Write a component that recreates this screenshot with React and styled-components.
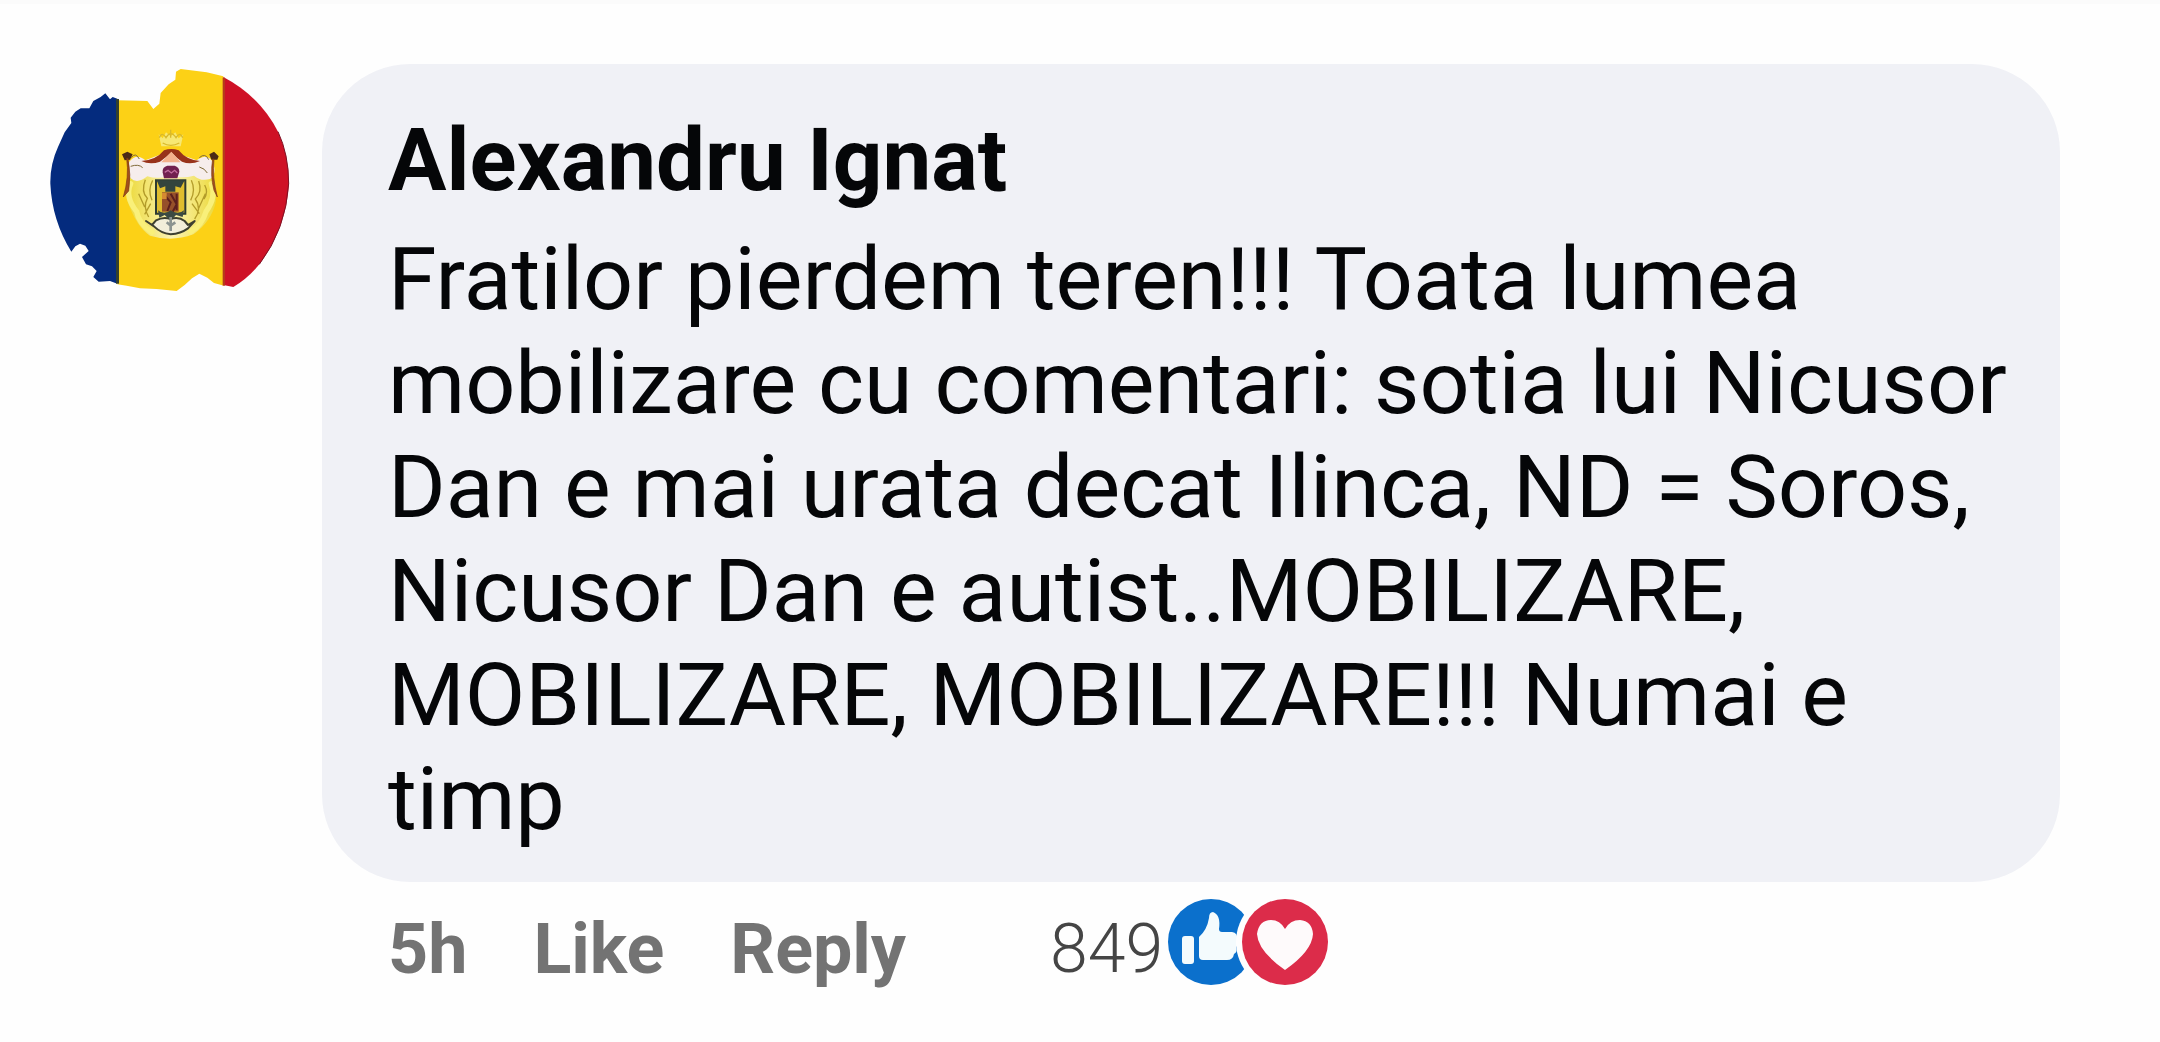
import styled, { createGlobalStyle } from "styled-components";

const GlobalStyle = createGlobalStyle`
  * {
    box-sizing: border-box;
  }

  body {
    margin: 0;
    background-color: #fefefe;
    font-family: Roboto, "Liberation Sans", sans-serif;
  }
`;

const Page = styled.main`
  border-top: 4px solid #fbfbfb;
  padding: 60px 100px 40px 50px;
`;

const Comment = styled.article`
  display: flex;
  align-items: flex-start;
  gap: 32px;
`;

const AvatarLink = styled.a`
  flex: none;
  display: block;
  width: 240px;
  padding-top: 3px;

  svg {
    display: block;
    width: 100%;
  }
`;

const Body = styled.div`
  flex: 1;
  min-width: 0;
`;

const Bubble = styled.div`
  padding: 44px 40px 31px 66px;
  border-radius: 88px;
  background-color: #f0f1f6;
  color: #050608;
`;

const AuthorName = styled.a`
  display: block;
  width: fit-content;
  font-size: 87px;
  font-weight: 700;
  line-height: 104px;
  color: inherit;
  text-decoration: none;
`;

const CommentText = styled.p`
  margin: 15px 0 0;
  font-size: 88px;
  line-height: 104px;
`;

const Footer = styled.footer`
  display: flex;
  align-items: flex-start;
  padding: 16px 0 0 66px;
  font-size: 70px;
  line-height: 102px;
  color: #737373;
`;

const Actions = styled.div`
  display: flex;
  gap: 66px;
  font-weight: 700;
`;

const Time = styled.time``;

const ActionButton = styled.button`
  padding: 0;
  border: none;
  background: none;
  font: inherit;
  color: inherit;
  cursor: pointer;
`;

const Reactions = styled.button`
  display: flex;
  align-items: flex-start;
  gap: 4px;
  margin-left: 144px;
  padding: 0;
  border: none;
  background: none;
  font: inherit;
  font-size: 68px;
  font-weight: 300;
  color: #454545;
  cursor: pointer;

  svg {
    display: block;
    width: 162px;
    height: 88px;
  }
`;

const FlagAvatar = () => (
  <svg viewBox="60 50 720 690" role="img" aria-label="Alexandru Ignat">
    <defs>
      <linearGradient id="cape" x1="0" x2="1">
        <stop offset="0" stopColor="#ecd93a" />
        <stop offset="0.5" stopColor="#fbf3b4" />
        <stop offset="1" stopColor="#ecd93a" />
      </linearGradient>
    </defs>
    {/* blue stripe with the torn edge */}
    <path
      d="M262 145 L248 140 L240 147 L226 129 L212 140 L190 152 L178 174 L152 174 L136 184 L122 202 L124 218 L104 246 L84 290 Q60 342 61 400 Q66 510 124 604 L136 588 L150 580 L166 586 L176 602 L156 620 L168 642 L186 648 L200 662 L190 680 L206 694 L240 692 L262 700 Z"
      fill="#042b7e"
    />
    <path
      d="M262 150 L352 152 L370 176 L388 160 L392 128 L416 102 L436 88 L438 64 L452 56 L500 62 L530 66 L580 78 L582 706 L552 698 L532 682 L508 670 L486 684 L464 704 L440 722 L380 716 L330 714 L290 706 L262 702 Z"
      fill="#fcd116"
    />
    <path d="M258 146 h9 v554 h-9 Z" fill="#33402f" />
    {/* red stripe */}
    <path d="M580 80 Q690 138 744 244 Q776 312 777 400 Q768 536 688 642 Q654 684 610 710 L580 704 Z" fill="#cf1126" />
    <path d="M578 82 h7 v624 h-7 Z" fill="#b63a1c" />
    <path d="M744 244 Q776 312 776 400 Q768 536 688 642" fill="none" stroke="#7d1224" strokeWidth="3" />

    {/* crown */}
    <path d="M386 252 L398 264 L408 246 L422 258 L436 246 L446 264 L460 252 L452 288 H394 Z" fill="#f7e873" />
    <path d="M388 262 Q396 242 408 262 Q422 238 438 262 Q450 242 458 262 M398 278 Q422 292 448 278 M422 238 V262" fill="none" stroke="#d9b92b" strokeWidth="4" />
    {/* cape and supporters */}
    <path d="M300 350 Q286 400 292 452 Q320 530 360 556 Q426 576 490 552 Q546 512 558 452 Q562 400 544 350 Z" fill="url(#cape)" />
    <path d="M302 400 Q284 440 320 484 Q326 520 366 546 M544 400 Q560 440 528 484 Q516 524 482 544" fill="none" stroke="#f9f07a" strokeWidth="16" strokeLinecap="round" />
    <path
      d="M346 388 Q332 424 352 444 Q338 470 356 500 M368 390 Q352 420 366 450 M484 390 Q498 420 482 450 M506 392 Q518 424 496 446 Q516 474 494 506 M326 430 L344 470 M526 430 L506 474 M362 460 L344 492 M486 460 L508 490 M524 404 Q536 426 522 446"
      fill="none"
      stroke="#b39c2a"
      strokeWidth="4"
    />
    <path d="M298 334 Q320 306 346 330 L420 302 L500 330 Q530 306 548 334 Q562 372 540 386 Q512 394 492 376 Q456 386 420 376 Q384 388 352 378 Q322 402 302 384 Q290 358 298 334 Z" fill="#f6edec" />
    <path d="M334 332 Q378 330 402 300 Q424 292 446 300 Q470 330 510 332 Q482 344 456 334 Q440 324 424 306 Q408 322 390 334 Q360 344 334 332 Z" fill="#98321a" />
    <path d="M424 304 L452 336 H394 Z" fill="#f3b18c" />
    {/* tassels */}
    <path d="M276 312 L292 304 L308 312 L300 328 L284 330 Z M538 312 L552 304 L566 318 L562 328 L544 328 Z" fill="#4b2a17" />
    <path d="M290 324 Q298 380 280 440 L296 422 Q304 374 294 324 Z M552 326 Q546 380 562 440 L552 420 Q540 374 548 326 Z" fill="#a34f19" stroke="#7b3a16" strokeWidth="2" />
    <path d="M304 322 Q316 304 328 326 M508 322 Q526 306 536 328 M302 348 Q326 340 338 352 M508 350 Q524 354 532 368" fill="none" stroke="#806a38" strokeWidth="3" />
    {/* shield */}
    <path d="M398 366 Q396 350 412 346 H434 Q448 350 448 364 L442 384 H402 Z" fill="#71204f" />
    <path d="M404 366 L414 360 L424 368 L434 360 L442 368" fill="none" stroke="#c06a9c" strokeWidth="4" />
    <path d="M378 390 H466 V490 H378 Z" fill="#e0bd2e" stroke="#2d3a31" strokeWidth="6" />
    <path d="M380 390 H464 L452 412 L436 408 V424 H406 V408 L390 414 Z" fill="#34443d" />
    <path d="M396 426 H446 V484 H396 Z" fill="#96502a" />
    <path d="M400 430 L422 456 L412 482 M422 430 L440 462 L428 484 M440 430 V480" fill="none" stroke="#5c1f1d" strokeWidth="6" />
    <path d="M396 428 h14 v18 h-14 Z" fill="#d68a32" />
    <path d="M348 512 L366 524 L378 510 Q400 498 422 506 Q446 498 464 512 L474 524 L494 512 L474 534 Q452 550 422 552 Q392 548 372 528 Z" fill="#f2eeda" stroke="#3e4030" strokeWidth="6" strokeLinejoin="round" />
    <path d="M384 480 Q402 496 422 480 Q444 496 462 480 L458 500 L438 494 L422 512 L404 494 L388 502 Z" fill="#3b4a43" />
    <path d="M422 500 V542 M410 516 L422 526 L436 516" fill="none" stroke="#8b9390" strokeWidth="8" />
  </svg>
);

/* like and love badges, the love one overlaps the like one */
const ReactionIcons = () => (
  <svg viewBox="0 0 162 88" aria-hidden="true">
    <circle cx="44" cy="44" r="43" fill="#0b70cc" />
    <rect x="15" y="38" width="12" height="28" rx="3" fill="#f4fbfd" />
    <path
      d="M32 39 Q40 32 42 20 Q42 14 46 14 Q54 17 52 31 Q52 34 55 34 H65 Q71 35 70 41 Q73 45 69 49 Q71 54 67 56 Q66 62 60 62 H36 Q32 62 32 58 Z"
      fill="#f4fbfd"
    />
    <circle cx="118" cy="44" r="49" fill="#fefefe" />
    <circle cx="118" cy="44" r="43" fill="#dc2c4a" />
    <path d="M118 72 Q91 53 90 36 Q92 22 104 22 Q113 22 118 31 Q123 22 133 22 Q145 23 146 36 Q145 53 118 72 Z" fill="#fefafb" />
  </svg>
);

const App = () => {
  return (
    <>
      <GlobalStyle />
      <Page>
        <Comment>
          <AvatarLink href="#profile">
            <FlagAvatar />
          </AvatarLink>
          <Body>
            <Bubble>
              <AuthorName href="#profile">Alexandru Ignat</AuthorName>
              <CommentText>
                Fratilor pierdem teren!!! Toata lumea mobilizare cu comentari: sotia lui Nicusor Dan e mai urata
                decat Ilinca, ND = Soros, Nicusor Dan e autist..MOBILIZARE, MOBILIZARE, MOBILIZARE!!! Numai e timp
              </CommentText>
            </Bubble>
            <Footer>
              <Actions>
                <Time>5h</Time>
                <ActionButton type="button">Like</ActionButton>
                <ActionButton type="button">Reply</ActionButton>
              </Actions>
              <Reactions type="button" aria-label="849 reactions">
                <span>849</span>
                <ReactionIcons />
              </Reactions>
            </Footer>
          </Body>
        </Comment>
      </Page>
    </>
  );
};

export default App;
